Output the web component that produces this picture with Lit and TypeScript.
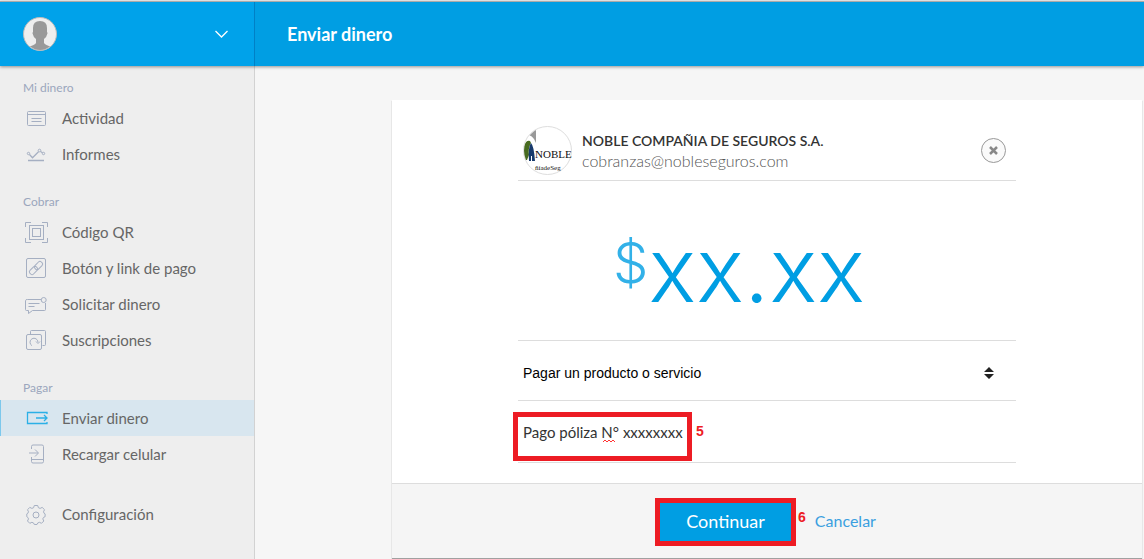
import { LitElement, html, css, svg } from "lit";
import { customElement, state } from "lit/decorators.js";

const icons: Record<string, unknown> = {
  activity: svg`<rect x="2.5" y="4.5" width="18" height="14" rx="1"/><path d="M2.5 7.5h18M6.500 11.500h10M6.500 14.500h10"/>`,
  reports: svg`<circle cx="3.500" cy="10.500" r="1.200"/><circle cx="14.500" cy="7.500" r="1.300"/><circle cx="18.500" cy="10.500" r="1.200"/><path d="M4.500 11.500l3 3.200 6-6M15.500 8.500l2 1.200M3 17.500h16" stroke-width="1.300"/>`,
  qr: svg`<path d="M.5 6V1.500h5.500M17 1.500h5.500V6M.5 17v4.500h5.500M17 21.500h5.500V17"/><rect x="4.500" y="4.500" width="14" height="14"/><rect x="7.500" y="7.500" width="8" height="8"/>`,
  link: svg`<rect x="1.500" y="1.500" width="19" height="19" rx="1.500"/><g transform="rotate(-45 11 11)"><rect x="3" y="8.500" width="9" height="5" rx="2"/><rect x="10" y="8.500" width="9" height="5" rx="2"/></g>`,
  request: svg`<path d="M16 6.500H2.500q-2 0-2 1v9q0 1 1 1h2v3l4-3h12q1 0 1-1V10M3.500 10.500h11M3.500 13.500h6"/><circle cx="18.700" cy="7" r="2.500"/>`,
  subscriptions: svg`<path d="M5.500 5V2.500q0-1 1-1h13q1 0 1 1v13q0 1-1 1h-2"/><rect x="1.500" y="5.500" width="15" height="15" rx="1.500"/><path d="M7 16.700a4 4 0 1 1 6-3.500M11 12.500l2 2 2-2"/>`,
  send: svg`<path d="M22 7V5.500H2.500v11H22V15M11 11h11M19 8l3 3-3 3" stroke-width="1.300"/>`,
  recharge: svg`<path d="M6.500 6V3.500q0-1.500 1.500-1.500h9q1.500 0 1.500 1.500v15q0 1.500-1.500 1.500H8q-1.500 0-1.500-1.500V14M6.500 16.500h12M4 10h9M10 6.500l3.500 3.500-3.500 3.500"/>`,
  settings: svg`<path d="M9.300 2.500h3.400l.7 2.200 1.700.7 2.100-1 2.300 2.300-1 2.100.6 1.500 1 .6v2.800l-1.600.7-.7 1.500 1 2.100-2.300 2.300-2.100-1-1.700.7-.7 1.500H9.300l-.7-1.500-1.700-.7-2.100 1-2.300-2.300 1-2.100-.7-1.500-1-.7v-2.800l1-.6.700-1.500-1-2.100 2.300-2.300 2.100 1 1.700-.7z"/><circle cx="11" cy="12" r="3"/>`,
};

interface Item { icon: string; label: string; active?: boolean; }
interface Section { title: string; items: Item[]; }

const sections: Section[] = [
  { title: "Mi dinero", items: [{ icon: "activity", label: "Actividad" }, { icon: "reports", label: "Informes" }] },
  { title: "Cobrar", items: [
    { icon: "qr", label: "Código QR" },
    { icon: "link", label: "Botón y link de pago" },
    { icon: "request", label: "Solicitar dinero" },
    { icon: "subscriptions", label: "Suscripciones" } ] },
  { title: "Pagar", items: [
    { icon: "send", label: "Enviar dinero", active: true },
    { icon: "recharge", label: "Recargar celular" } ] },
];

@customElement("side-menu")
export class SideMenu extends LitElement {
  static styles = css`
    :host { display: block; background: #eee; border-right: 1px solid #d2d2d2; box-sizing: border-box; padding-top: 10px; }
    h2 { margin: 0; padding-left: 23px; font-size: 12px; line-height: 24px; font-weight: 400; color: #9ba6bd; }
    ul { list-style: none; margin: 0 0 18px; padding: 0; }
    .last { margin: 24px 0; }
    .item { display: flex; align-items: center; gap: 14px; height: 36px; box-sizing: border-box; padding-left: 24px; border-left: 1px solid transparent;
      font-size: 15px; line-height: 18px; color: #666; text-decoration: none; }
    .item.active { background: #d8e6ef; border-left-color: #7cc8ec; }
    svg { width: 23px; height: 23px; fill: none; stroke: #a5afc2; stroke-width: 1; flex: none; }
    .active svg { stroke: #2bb0e6; }
  `;
  private item(i: Item) {
    return html`<li><a class="item ${i.active ? "active" : ""}" href="#" aria-current=${i.active ? "page" : "false"}>
      <svg viewBox="0 0 23 23" aria-hidden="true">${icons[i.icon]}</svg>${i.label}</a></li>`;
  }
  render() {
    return html`<nav>
      ${sections.map((s) => html`<h2>${s.title}</h2><ul>${s.items.map((i) => this.item(i))}</ul>`)}
      <ul class="last">${this.item({ icon: "settings", label: "Configuración" })}</ul>
    </nav>`;
  }
}

@customElement("payment-card")
export class PaymentCard extends LitElement {
  @state() private note = "Pago póliza N° xxxxxxxx";
  static styles = css`
    :host { display: block; background: #fff; box-shadow: 0 1px 1px rgba(0, 0, 0, .35); }
    .body { max-width: 498px; margin: 0 auto; padding-bottom: 20px; }
    .row { border-bottom: 1px solid #ddd; box-sizing: border-box; }
    .payee { display: flex; align-items: center; gap: 10px; height: 81px; padding: 20px 10px 0 5px; }
    .logo { width: 49px; height: 49px; flex: none; }
    .who { flex: 1; min-width: 0; padding-top: 2px; }
    .name { font-size: 14px; line-height: 20px; font-weight: 600; color: #333; }
    .mail { font-size: 16px; line-height: 20px; color: #555; font-weight: 300; }
    .close { width: 25px; height: 25px; padding: 0; border: 1px solid #999; border-radius: 50%; background: #fafafa; display: grid; place-items: center; }
    .close svg { width: 9px; height: 9px; stroke: #888; stroke-width: 2.500; }
    .amount { display: flex; justify-content: center; align-items: flex-start; height: 160px; padding: 34px 56px 0 0; color: #009ee3;
      font-family: Inter, "Open Sans", sans-serif; font-weight: 300; }
    .currency { font-size: 56px; line-height: 96px; opacity: .8; }
    .value { font-size: 90px; line-height: 110px; }
    .kind { position: relative; height: 60px; }
    select { appearance: none; width: 100%; height: 59px; border: 0; background: none; padding: 4px 5px 0; margin: 0;
      font: 14px "Liberation Sans", Arial, sans-serif; color: #000; }
    .sort { position: absolute; right: 22px; top: 26px; width: 10px; height: 12px; pointer-events: none; fill: #222; }
    .detail { display: flex; align-items: flex-start; gap: 9px; height: 62px; padding-top: 16px; }
    .note { position: relative; flex: none; outline: 5px solid #ed1c24; width: 169px; height: 39px; }
    input { width: 100%; height: 29px; border: 0; background: none; padding: 0 0 0 5px; box-sizing: border-box; font: inherit; font-size: 15px; color: #333; display: block; }
    .squiggle { position: absolute; left: 85px; top: 22px; width: 12px; height: 4px; fill: none; stroke: #f33; }
    .mark { font: bold 14px/16px "Liberation Sans", Arial, sans-serif; color: #ed1c24; }
    .detail .mark { margin-top: 6px; }
    footer { display: flex; justify-content: center; align-items: flex-start; background: #f5f5f5; border-top: 1px solid #ddd; padding: 19px 0 17px 2px; }
    .go { width: 131px; height: 38px; border: 0; padding: 0 0 2px; outline: 5px solid #ed1c24; background: #009ee3; color: #fff; font: inherit; font-size: 18px; }
    footer .mark { margin: 6px 9px 0 7px; }
    .cancel { font-size: 16px; line-height: 36px; color: #3a9fe0; text-decoration: none; }
  `;
  render() {
    return html`
      <div class="body">
        <div class="row payee">
          <svg class="logo" viewBox="0 0 49 49" role="img" aria-label="Noble Seguros">
            <defs><clipPath id="round"><circle cx="24.500" cy="24.500" r="23.500"/></clipPath></defs>
            <circle cx="24.500" cy="24.500" r="24" fill="#fff" stroke="#ddd"/>
            <g clip-path="url(#round)">
              <path d="M6 9L13 3v14l-2-4q-2-3-5-4z" fill="#999"/>
              <path d="M1 34V20q2-6 6-5l1 2q-3 5-2 12l-2 5z" fill="#486b20"/>
              <path d="M6 35q-1-14 2-18 3 3 4 18H9v-5H8v5z" fill="#173a6c"/>
            </g>
            <text x="12" y="32" font-family="Liberation Serif, serif" font-size="11" fill="#111">NOBLE</text>
            <text x="12" y="44" font-family="Liberation Serif, serif" font-size="7" fill="#111">ñíadeSeg</text>
          </svg>
          <div class="who">
            <div class="name">NOBLE COMPAÑIA DE SEGUROS S.A.</div>
            <div class="mail">cobranzas@nobleseguros.com</div>
          </div>
          <button class="close" aria-label="Quitar"><svg viewBox="0 0 9 9"><path d="M1 1l7 7M8 1l-7 7"/></svg></button>
        </div>
        <div class="row amount"><span class="currency">$</span><span class="value">xx.xx</span></div>
        <div class="row kind">
          <select aria-label="Motivo"><option>Pagar un producto o servicio</option></select>
          <svg class="sort" viewBox="0 0 10 12" aria-hidden="true"><path d="M5 0l5 5H0zM0 7h10l-5 5z"/></svg>
        </div>
        <div class="row detail">
          <div class="note">
            <input aria-label="Descripción" spellcheck="false" .value=${this.note} @input=${(e: Event) => (this.note = (e.target as HTMLInputElement).value)} />
            <svg class="squiggle" viewBox="0 0 12 4" aria-hidden="true"><path d="M0 3l2-2 2 2 2-2 2 2 2-2 2 2"/></svg>
          </div>
          <span class="mark">5</span>
        </div>
      </div>
      <footer>
        <button class="go">Continuar</button><span class="mark">6</span><a class="cancel" href="#">Cancelar</a>
      </footer>`;
  }
}

@customElement("app-root")
export class AppRoot extends LitElement {
  static styles = css`
    :host { display: grid; grid-template-columns: 255px 1fr; grid-template-rows: auto 1fr; min-height: 100vh; box-sizing: border-box;
      border-top: 1px solid #eee; background: #f6f6f6; font-family: Lato, "Open Sans", sans-serif; }
    header { grid-column: 1 / -1; display: grid; grid-template-columns: subgrid; height: 64px; background: #009ee3; border-top: 1px solid #aaa;
      box-shadow: 0 1px 3px rgba(0, 0, 0, .4); position: relative; z-index: 1; }
    .account { display: flex; align-items: center; justify-content: space-between; box-sizing: border-box; padding: 0 26px 0 23px; background: #00a2ea; border: 0; border-right: 1px solid #0080c6; }
    .avatar { width: 34px; height: 34px; }
    .chevron { width: 13px; height: 8px; fill: none; stroke: #fff; stroke-width: 1.300; }
    h1 { margin: 0; padding-left: 32px; align-self: center; font-size: 18px; line-height: 24px; font-weight: 700; color: #fff; }
    main { padding: 34px 2px 0 137px; }
  `;
  render() {
    return html`
      <header>
        <button class="account" aria-label="Cuenta">
          <svg class="avatar" viewBox="0 0 34 34">
            <defs><clipPath id="face"><circle cx="17" cy="17" r="16"/></clipPath></defs>
            <circle cx="17" cy="17" r="16.500" fill="#eee" stroke="#bbb"/>
            <path clip-path="url(#face)" fill="#999" d="M10 11q0-7 7-7t7 7v4l.6 1-1.500 4-2.100 2v4q1 2 8 4v6H5v-6q7-2 8-4v-4l-2.100-2-1.500-4 .6-1z"/>
          </svg>
          <svg class="chevron" viewBox="0 0 13 8"><path d="M.5 1l6 6 6-6"/></svg>
        </button>
        <h1>Enviar dinero</h1>
      </header>
      <side-menu></side-menu>
      <main><payment-card></payment-card></main>`;
  }
}
